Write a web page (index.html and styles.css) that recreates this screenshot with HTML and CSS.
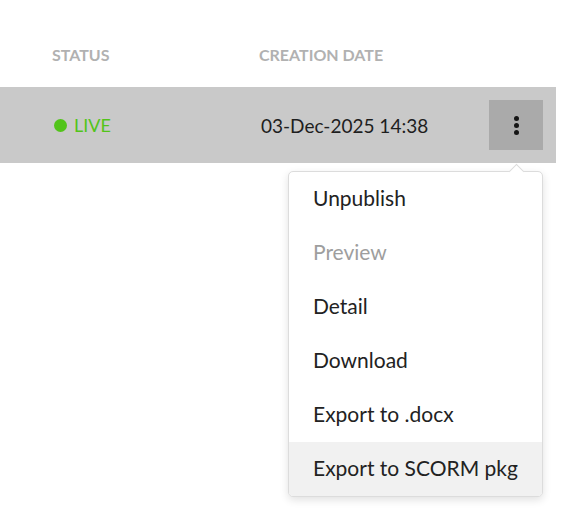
FILE: index.html
```html
<!DOCTYPE html>
<html>
<head>
<meta charset="utf-8">
<link rel="stylesheet" href="styles.css">
</head>
<body>
<div class="table">
  <div class="head">
    <div class="col-status">STATUS</div>
    <div class="col-date">CREATION DATE</div>
  </div>
  <div class="row">
    <div class="col-status status"><span class="dot"></span>LIVE</div>
    <div class="col-date date">03-Dec-2025 14:38</div>
    <div class="actions">
      <button class="kebab" aria-label="More actions">
        <span></span><span></span><span></span>
      </button>
      <div class="menu">
        <div class="item">Unpublish</div>
        <div class="item disabled">Preview</div>
        <div class="item">Detail</div>
        <div class="item">Download</div>
        <div class="item">Export to .docx</div>
        <div class="item active">Export to SCORM pkg</div>
      </div>
    </div>
  </div>
</div>
</body>
</html>
```

FILE: styles.css
```css
* { box-sizing: border-box; }
html, body { margin: 0; padding: 0; background: #fff; }
body { font-family: Lato, "Noto Sans", sans-serif; color: #222; width: 586px; height: 532px; overflow: hidden; }

.table { width: 556px; }

.head {
  display: flex;
  align-items: center;
  height: 87px;
  padding-top: 22px;
  font-size: 16px;
  font-weight: 700;
  color: #b1b1b1;
}

.col-status { width: 259px; padding-left: 52px; flex: none; }
.col-date { flex: none; padding-left: 0; }

.row {
  display: flex;
  align-items: center;
  height: 76px;
  background: #c9c9c9;
}

.status {
  display: flex;
  align-items: center;
  gap: 7px;
  color: #52c41a;
  font-size: 18px;
  padding-left: 54px;
}
.dot {
  width: 13px; height: 13px; border-radius: 50%;
  background: #52c41a;
  display: inline-block;
}

.date { font-size: 19px; color: #1e1e1e; padding-left: 2px; }

.actions { margin-left: auto; margin-right: 13px; position: relative; }

.kebab {
  width: 54px; height: 50px;
  border: 0; padding: 0; margin: 0;
  background: #aaaaaa;
  display: flex; flex-direction: column; align-items: center; justify-content: center;
  gap: 2px;
}
.kebab span { width: 5px; height: 5px; border-radius: 50%; background: #151515; }

.menu {
  position: absolute;
  top: 71px;
  right: 0;
  width: 255px;
  background: #fff;
  border: 1px solid #dcdcdc;
  border-radius: 5px;
  box-shadow: 0 3px 8px rgba(0,0,0,0.12);
  overflow: visible;
}
.menu::before {
  content: "";
  position: absolute;
  top: -6px;
  right: 20px;
  width: 10px; height: 10px;
  background: #fff;
  border-left: 1px solid #dcdcdc;
  border-top: 1px solid #dcdcdc;
  transform: rotate(45deg);
}
.item {
  height: 54px;
  display: flex;
  align-items: center;
  padding-left: 24px;
  padding-bottom: 3px;
  font-size: 21px;
  color: #222;
  position: relative;
}
.item.disabled { color: #9e9e9e; }
.item.active { background: #f1f1f1; border-radius: 0 0 4px 4px; }
```
